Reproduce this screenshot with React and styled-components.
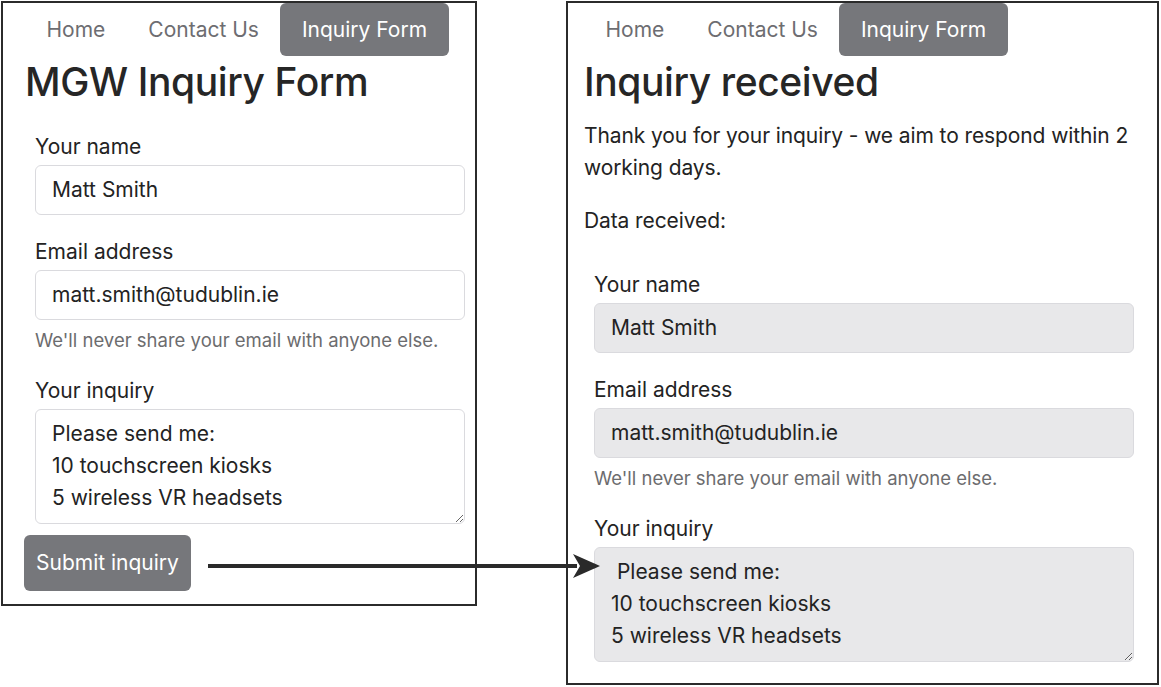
import React from 'react';
import styled, { createGlobalStyle } from 'styled-components';

const GlobalStyle = createGlobalStyle`
  body {
    margin: 0;
    background: #fff;
    font-family: Inter, "Liberation Sans", Arial, sans-serif;
    color: #232323;
  }
`;

const Stage = styled.div`
  position: relative;
  box-sizing: border-box;
  width: 1161px;
  height: 687px;
  padding: 1px 0 0 1px;
  display: flex;
  align-items: flex-start;
  gap: 89px;
  overflow: hidden;
`;

const Panel = styled.section`
  box-sizing: border-box;
  width: ${(p) => p.$width}px;
  height: ${(p) => p.$height}px;
  border: 2px solid #2b2b2b;
  padding: 0 ${(p) => p.$padRight}px 0 ${(p) => p.$padLeft}px;
  display: flex;
  flex-direction: column;
  align-items: flex-start;
`;

const Nav = styled.nav`
  display: flex;
`;

const NavLink = styled.a`
  display: block;
  padding: 10.5px 21.5px;
  font-size: 21px;
  line-height: 32px;
  border-radius: 6px;
  text-decoration: none;
  color: ${(p) => (p.$active ? '#fff' : '#6d6d71')};
  background: ${(p) => (p.$active ? '#76777b' : 'transparent')};
`;

const Title = styled.h1`
  margin: 3px 0 14px;
  font-size: 39px;
  font-weight: 500;
  line-height: 1.2;
  letter-spacing: -0.4px;
  color: #262626;
`;

const Text = styled.p`
  margin: 0 0 21px;
  font-size: 21px;
  line-height: 32px;
  letter-spacing: -0.1px;
`;

const FormBox = styled.form`
  box-sizing: border-box;
  align-self: stretch;
  padding: 11px 10px;
  margin: 0;
`;

const Group = styled.div`
  margin-bottom: 21px;

  &:last-child {
    margin-bottom: 0;
  }
`;

const Label = styled.label`
  display: block;
  margin-bottom: 2px;
  font-size: 21px;
  line-height: 32px;
`;

const fieldCss = `
  display: block;
  box-sizing: border-box;
  width: 100%;
  margin: 0;
  padding: 8px 16px;
  border: 1px solid #dadade;
  border-radius: 6px;
  font-family: Inter, "Liberation Sans", Arial, sans-serif;
  font-size: 21px;
  line-height: 32px;
  color: #232323;
  outline: none;
`;

const Input = styled.input`
  ${fieldCss}
  height: 50px;
  background: ${(p) => (p.$locked ? '#e8e8ea' : '#fff')};
`;

const TextArea = styled.textarea`
  ${fieldCss}
  height: 115px;
  resize: vertical;
  overflow: hidden;
  background: ${(p) => (p.$locked ? '#e8e8ea' : '#fff')};
`;

const Help = styled.div`
  margin: 6px 0 3px;
  font-size: 18.5px;
  line-height: 28px;
  color: #6c6c6e;
`;

const SubmitButton = styled.button`
  margin: 0 0 0 -1px;
  padding: 12px 12px;
  height: 56px;
  border: none;
  border-radius: 6px;
  background: #76777b;
  color: #fff;
  font-family: Inter, "Liberation Sans", Arial, sans-serif;
  font-size: 21px;
  line-height: 32px;
`;

const Arrow = styled.svg`
  position: absolute;
  left: 205px;
  top: 552px;
`;

const InquiryFields = ({ locked, first }) => (
  <FormBox onSubmit={(e) => e.preventDefault()}>
    <Group>
      <Label>Your name</Label>
      <Input $locked={locked} readOnly value="Matt Smith" />
    </Group>
    <Group>
      <Label>Email address</Label>
      <Input $locked={locked} readOnly value="matt.smith@tudublin.ie" />
      <Help>We'll never share your email with anyone else.</Help>
    </Group>
    <Group>
      <Label>Your inquiry</Label>
      <TextArea
        $locked={locked}
        readOnly
        value={`${first}\n10 touchscreen kiosks\n5 wireless VR headsets`}
      />
    </Group>
  </FormBox>
);

const Menu = () => (
  <Nav>
    <NavLink>Home</NavLink>
    <NavLink>Contact Us</NavLink>
    <NavLink $active>Inquiry Form</NavLink>
  </Nav>
);

const App = () => {
  return (
    <>
      <GlobalStyle />
      <Stage>
        <Panel $width={476} $height={605} $padLeft={22} $padRight={0}>
          <Menu />
          <Title>MGW Inquiry Form</Title>
          <InquiryFields first="Please send me:" />
          <SubmitButton type="button">Submit inquiry</SubmitButton>
        </Panel>

        <Panel $width={593} $height={684} $padLeft={16} $padRight={13}>
          <Menu />
          <Title>Inquiry received</Title>
          <Text>Thank you for your inquiry - we aim to respond within 2 working days.</Text>
          <Text>Data received:</Text>
          <InquiryFields locked first=" Please send me:" />
        </Panel>

        <Arrow width="400" height="30" viewBox="0 0 400 30">
          <line x1="3" y1="14" x2="372" y2="14" stroke="#2a2a2a" strokeWidth="4" />
          <polygon points="395,14 368,2 375,14 368,26" fill="#2a2a2a" />
        </Arrow>
      </Stage>
    </>
  );
};

export default App;
